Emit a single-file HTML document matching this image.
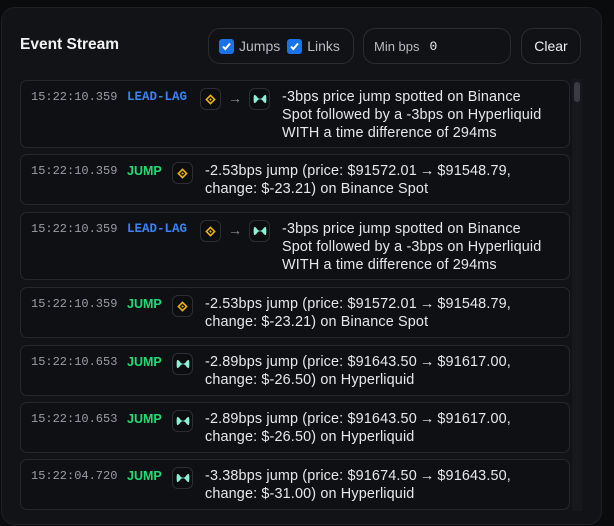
<!DOCTYPE html><html><head><style>
*{box-sizing:border-box;margin:0;padding:0}
body{width:614px;height:526px;background:#0a0b0d;font-family:"Liberation Sans",sans-serif;overflow:hidden;position:relative}
.panel{position:absolute;left:1px;top:7px;width:601px;height:518px;background:#121316;border:1px solid #1e2024;border-radius:14px}
.title{position:absolute;left:20px;top:36px;color:#f2f2f2;font-weight:bold;font-size:15.5px}
.box{position:absolute;top:28px;height:36px;border:1px solid #2a2c31;border-radius:12px;background:#111215;color:#b8bbc0;font-size:14px;display:flex;align-items:center}
.cb{width:15px;height:15px;background:#1a73e8;border-radius:3px;display:inline-flex;align-items:center;justify-content:center;margin-right:5px}
.card{position:absolute;left:20px;width:550px;background:#0f1013;border:1px solid #25272c;border-radius:7px}
.t{position:absolute;left:10px;top:9px;font-family:"Liberation Mono",monospace;font-size:12px;color:#9a9da3}
.k{position:absolute;left:106px;top:9px;font-weight:bold;font-size:12.5px}
.ll{color:#3b82f6;font-family:"Liberation Mono",monospace}
.j{color:#1fdc76}
.ic{position:absolute;top:7px;width:21px;height:22px;border:1px solid #2c2e33;border-radius:6px;background:#0c0d0f;display:flex;align-items:center;justify-content:center}
.ar{position:absolute;left:207px;top:9px;color:#8b8e94;font-size:14px}
.tx{position:absolute;top:7px;color:#e8e8ea;font-size:14.4px;line-height:18px;letter-spacing:.15px;white-space:nowrap}
.a{margin:0 3px}
.sb{position:absolute;left:572px;top:79px;width:10px;height:432px;background:#17181b}
.th{position:absolute;left:574px;top:82px;width:6px;height:20px;background:#3a3c41;border-radius:3px}
</style></head><body>
<div class="panel"></div>
<div class="title">Event Stream</div>
<div class="box" style="left:208px;width:146px;padding-left:10px"><span class="cb"><svg width="11" height="11" viewBox="0 0 11 11"><path d="M2 5.5l2.3 2.5L9 2.5" stroke="#fff" stroke-width="2" fill="none"/></svg></span>Jumps<span class="cb" style="margin-left:7px"><svg width="11" height="11" viewBox="0 0 11 11"><path d="M2 5.5l2.3 2.5L9 2.5" stroke="#fff" stroke-width="2" fill="none"/></svg></span>Links</div>
<div class="box" style="left:363px;width:148px;padding-left:10px;font-size:13px">Min bps<span style="margin-left:10px;color:#eee;font-family:'Liberation Mono',monospace">0</span></div>
<div class="box" style="left:521px;width:60px;justify-content:center;color:#f0f0f0">Clear</div>
<div class="sb"></div><div class="th"></div>

<svg width="0" height="0" style="position:absolute"><defs>
<symbol id="bn" viewBox="0 0 12 12"><path d="M6 1.2L10.8 6 6 10.8 1.2 6z M6 3.2L3.2 6 6 8.8 8.8 6z" fill="#f0b90b" fill-rule="evenodd"/><path d="M6 4.9L7.1 6 6 7.1 4.9 6z" fill="#f0b90b"/></symbol>
<symbol id="hl" viewBox="0 0 12 12"><path d="M1 2.5c1.2 0 2 1 2.8 2.2C4.3 5.3 5 5.8 6 5.8s1.7-.5 2.2-1.1C9 3.5 9.8 2.5 11 2.5c.6 1 .6 6 0 7-1.2 0-2-1-2.8-2.2C7.7 6.7 7 6.2 6 6.2s-1.7.5-2.2 1.1C3 8.5 2.2 9.5 1 9.5c-.6-1-.6-6 0-7z" fill="#8ef0d8"/></symbol>
</defs></svg>

<div class="card" style="top:80px;height:68px"><span class="t">15:22:10.359</span><span class="k ll">LEAD-LAG</span><span class="ic" style="left:179px"><svg width="13" height="13"><use href="#bn"/></svg></span><span class="ar">→</span><span class="ic" style="left:228px"><svg width="14" height="14"><use href="#hl"/></svg></span><div class="tx" style="left:261px">-3bps price jump spotted on Binance<br>Spot followed by a -3bps on Hyperliquid<br>WITH a time difference of 294ms</div></div>
<div class="card" style="top:154px;height:51px"><span class="t">15:22:10.359</span><span class="k j">JUMP</span><span class="ic" style="left:151px"><svg width="13" height="13"><use href="#bn"/></svg></span><div class="tx" style="left:184px">-2.53bps jump (price: $91572.01<span class="a">→</span>$91548.79,<br>change: $-23.21) on Binance Spot</div></div>
<div class="card" style="top:212px;height:68px"><span class="t">15:22:10.359</span><span class="k ll">LEAD-LAG</span><span class="ic" style="left:179px"><svg width="13" height="13"><use href="#bn"/></svg></span><span class="ar">→</span><span class="ic" style="left:228px"><svg width="14" height="14"><use href="#hl"/></svg></span><div class="tx" style="left:261px">-3bps price jump spotted on Binance<br>Spot followed by a -3bps on Hyperliquid<br>WITH a time difference of 294ms</div></div>
<div class="card" style="top:287px;height:51px"><span class="t">15:22:10.359</span><span class="k j">JUMP</span><span class="ic" style="left:151px"><svg width="13" height="13"><use href="#bn"/></svg></span><div class="tx" style="left:184px">-2.53bps jump (price: $91572.01<span class="a">→</span>$91548.79,<br>change: $-23.21) on Binance Spot</div></div>
<div class="card" style="top:345px;height:51px"><span class="t">15:22:10.653</span><span class="k j">JUMP</span><span class="ic" style="left:151px"><svg width="14" height="14"><use href="#hl"/></svg></span><div class="tx" style="left:184px">-2.89bps jump (price: $91643.50<span class="a">→</span>$91617.00,<br>change: $-26.50) on Hyperliquid</div></div>
<div class="card" style="top:402px;height:51px"><span class="t">15:22:10.653</span><span class="k j">JUMP</span><span class="ic" style="left:151px"><svg width="14" height="14"><use href="#hl"/></svg></span><div class="tx" style="left:184px">-2.89bps jump (price: $91643.50<span class="a">→</span>$91617.00,<br>change: $-26.50) on Hyperliquid</div></div>
<div class="card" style="top:459px;height:51px"><span class="t">15:22:04.720</span><span class="k j">JUMP</span><span class="ic" style="left:151px"><svg width="14" height="14"><use href="#hl"/></svg></span><div class="tx" style="left:184px">-3.38bps jump (price: $91674.50<span class="a">→</span>$91643.50,<br>change: $-31.00) on Hyperliquid</div></div>
</body></html>
